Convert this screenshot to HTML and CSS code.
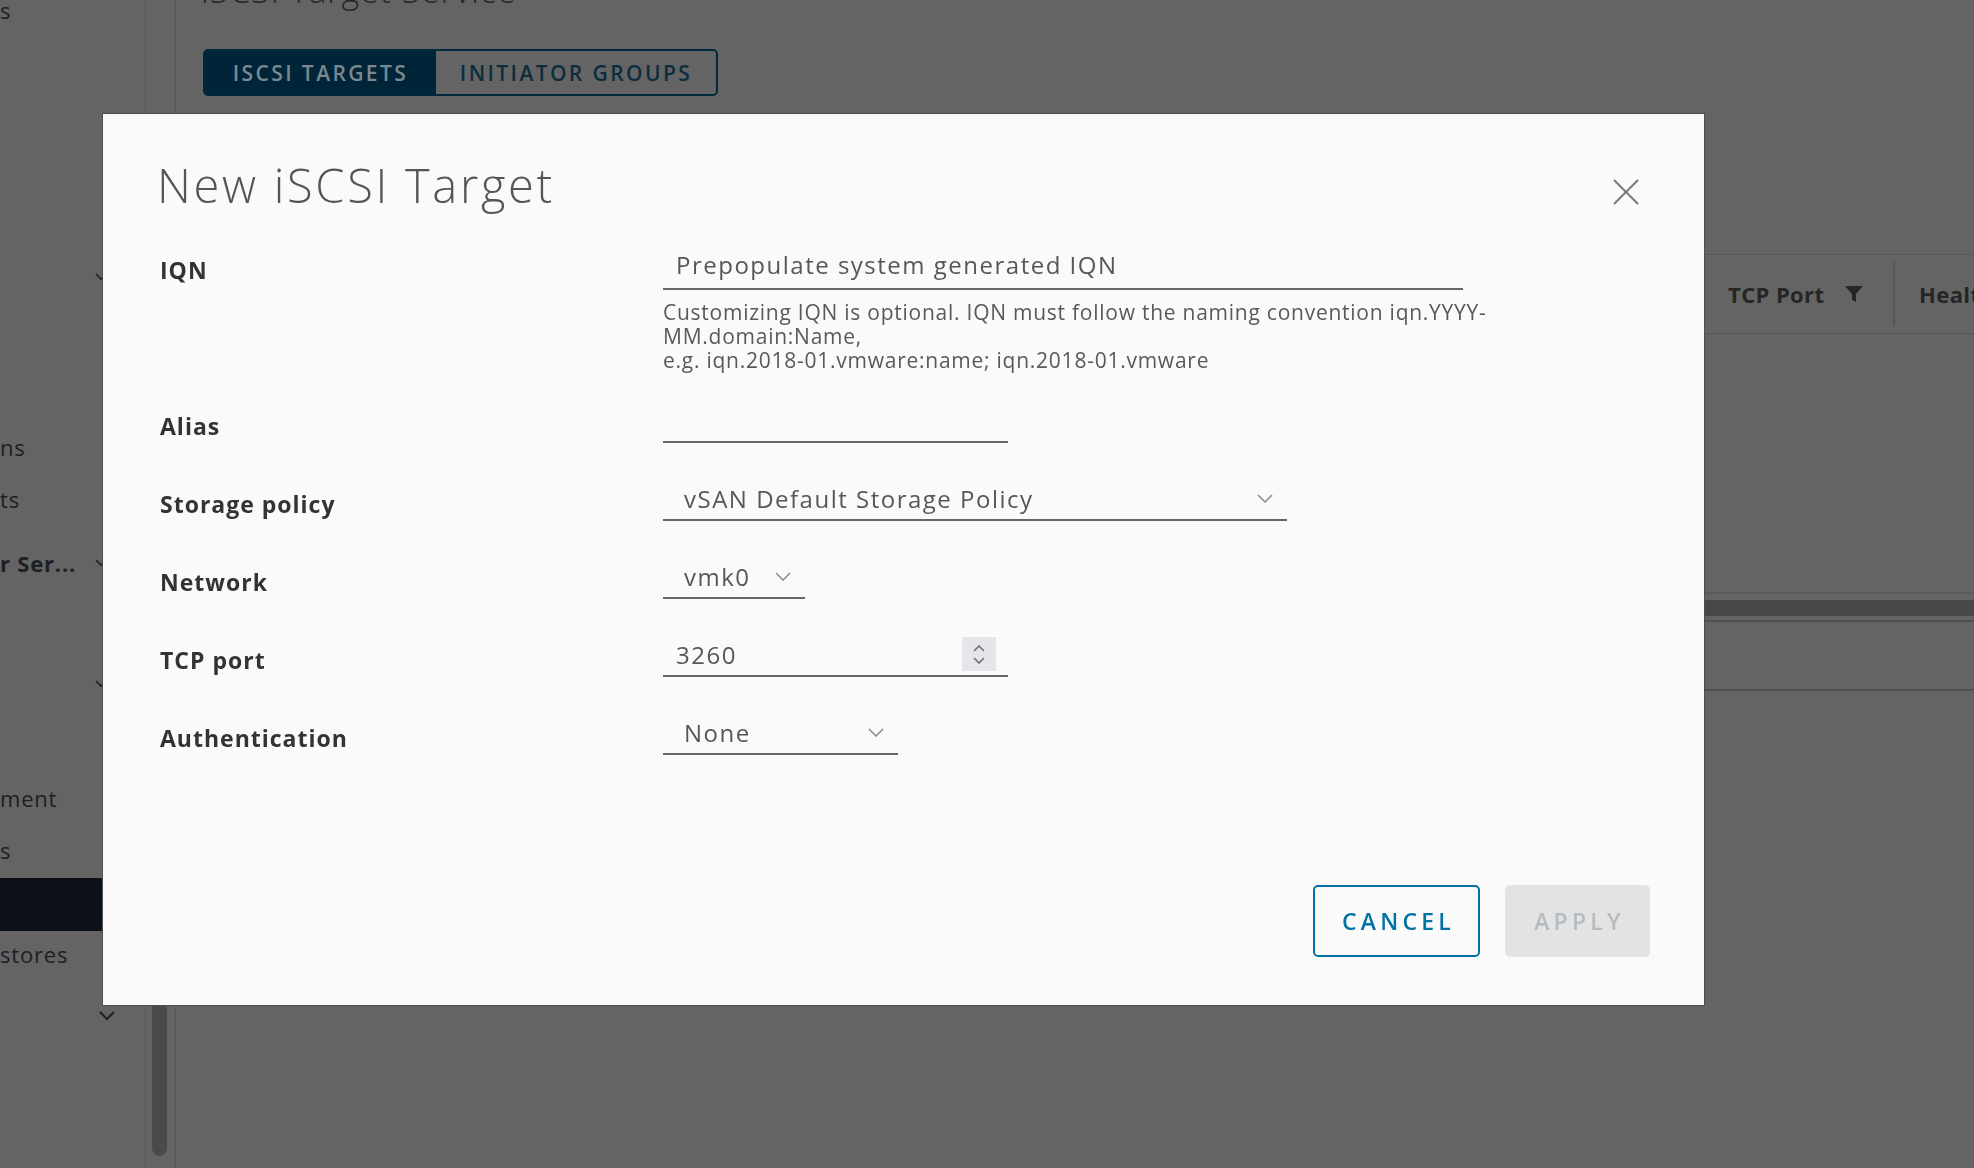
FILE: index.html
```html
<!DOCTYPE html>
<html lang="en">
<head>
<meta charset="utf-8">
<title>New iSCSI Target</title>
<link rel="stylesheet" href="styles.css">
</head>
<body>
<div class="page">
  <aside class="sidebar">
    <div class="nav-item n-first">s</div>
    <div class="nav-group n-g1"><span class="nav-text"></span><svg class="chev" viewBox="0 0 12 8" width="12" height="8"><polyline points="1,1 6,6 11,1"/></svg></div>
    <div class="nav-item n-ns">ns</div>
    <div class="nav-item">ts</div>
    <div class="nav-group n-g2"><span class="nav-text bold">r Ser...</span><svg class="chev" viewBox="0 0 12 8" width="12" height="8"><polyline points="1,1 6,6 11,1"/></svg></div>
    <div class="nav-group n-g3"><span class="nav-text"></span><svg class="chev" viewBox="0 0 12 8" width="12" height="8"><polyline points="1,1 6,6 11,1"/></svg></div>
    <div class="nav-item n-ment">ment</div>
    <div class="nav-item">s</div>
    <div class="nav-item selected"></div>
    <div class="nav-item n-stores">stores</div>
    <div class="nav-group n-g4"><span class="nav-text"></span><svg class="chev big" viewBox="0 0 16 10" width="16" height="10"><polyline points="1,1 8,8 15,1"/></svg></div>
  </aside>
  <div class="rail"><div class="thumb"></div></div>
  <main class="content">
    <h1 class="page-title">iSCSI Target Service</h1>
    <div class="tabs">
      <button class="tab active">ISCSI TARGETS</button>
      <button class="tab">INITIATOR GROUPS</button>
    </div>
    <div class="grid">
      <div class="grid-head">
        <div class="col col-hidden"></div>
        <div class="col col-port">
          <span>TCP Port</span>
          <svg class="filter" viewBox="0 0 18 18" width="18" height="18"><path d="M0 1 H18 L11 9 V17 L7 15 V9 Z"/></svg>
        </div>
        <div class="col-sep"></div>
        <div class="col col-health">Health</div>
      </div>
      <div class="grid-body"></div>
      <div class="grid-scroll"></div>
      <div class="grid-foot"></div>
    </div>
  </main>
</div>

<div class="overlay">
  <div class="modal">
    <div class="modal-header">
      <h2 class="modal-title">New iSCSI Target</h2>
      <button class="close" aria-label="Close">
        <svg viewBox="0 0 26 26" width="26" height="26"><line x1="1" y1="1" x2="25" y2="25"/><line x1="25" y1="1" x2="1" y2="25"/></svg>
      </button>
    </div>
    <div class="form">
      <div class="field field-iqn">
        <div class="label">IQN</div>
        <div class="control">
          <div class="input w-iqn iqn">Prepopulate system generated IQN</div>
          <p class="help">Customizing IQN is optional. IQN must follow the naming convention iqn.YYYY-<br>MM.domain:Name,<br>e.g. iqn.2018-01.vmware:name; iqn.2018-01.vmware</p>
        </div>
      </div>
      <div class="field field-alias">
        <div class="label">Alias</div>
        <div class="control">
          <div class="input w-alias"></div>
        </div>
      </div>
      <div class="field">
        <div class="label">Storage policy</div>
        <div class="control">
          <div class="input select w-policy"><span>vSAN Default Storage Policy</span><svg class="caret" viewBox="0 0 16 9" width="16" height="9"><polyline points="1,1 8,8 15,1"/></svg></div>
        </div>
      </div>
      <div class="field">
        <div class="label">Network</div>
        <div class="control">
          <div class="input select w-net"><span>vmk0</span><svg class="caret" viewBox="0 0 16 9" width="16" height="9"><polyline points="1,1 8,8 15,1"/></svg></div>
        </div>
      </div>
      <div class="field">
        <div class="label">TCP port</div>
        <div class="control">
          <div class="input number w-port"><span>3260</span>
            <div class="spinner">
              <svg viewBox="0 0 12 7" width="12" height="7"><polyline points="1,6 6,1 11,6"/></svg>
              <svg viewBox="0 0 12 7" width="12" height="7"><polyline points="1,1 6,6 11,1"/></svg>
            </div>
          </div>
        </div>
      </div>
      <div class="field">
        <div class="label">Authentication</div>
        <div class="control">
          <div class="input select w-auth"><span>None</span><svg class="caret" viewBox="0 0 16 9" width="16" height="9"><polyline points="1,1 8,8 15,1"/></svg></div>
        </div>
      </div>
    </div>
    <div class="modal-footer">
      <button class="btn btn-outline">CANCEL</button>
      <button class="btn btn-disabled">APPLY</button>
    </div>
  </div>
</div>
</body>
</html>
```

FILE: styles.css
```css
* { box-sizing: border-box; }

html, body {
  margin: 0;
  padding: 0;
  width: 1974px;
  height: 1168px;
  overflow: hidden;
  background: #646464;
  font-family: "Open Sans", "Noto Sans", sans-serif;
}

.page {
  display: flex;
  height: 1168px;
}

/* ---------- sidebar (dimmed) ---------- */
.sidebar {
  width: 146px;
  flex: 0 0 146px;
  border-right: 1px solid #575757;
  overflow: hidden;
  display: flex;
  flex-direction: column;
  color: #1c2024;
  font-size: 22px;
  letter-spacing: 0.8px;
}

.nav-item,
.nav-group {
  display: flex;
  align-items: center;
  justify-content: space-between;
  height: 52px;
  flex: 0 0 auto;
  white-space: nowrap;
}

.nav-group { height: 64px; padding-right: 38px; }

.nav-text.bold { font-weight: 700; }

.chev { fill: none; stroke: #1c2024; stroke-width: 1.6; }
.chev.big { stroke-width: 2; }

.n-first { margin-top: -16px; }
.n-g1 { margin-top: 209px; }
.n-ns { margin-top: 112px; }
.n-g2 { margin-top: 6px; }
.n-g3 { margin-top: 57px; }
.n-ment { margin-top: 56px; }
.selected { height: 53px; margin-top: 2px; background: #0b1117; }
.n-stores { height: 46px; }
.n-g4 { margin-top: 7px; padding-right: 30px; }

.rail {
  width: 30px;
  flex: 0 0 30px;
  border-right: 1px solid #575757;
  padding-left: 6px;
}

.thumb {
  width: 15px;
  margin-top: 300px;
  height: 856px;
  border-radius: 8px;
  background: #4a4a4a;
}

/* ---------- main content (dimmed) ---------- */
.content {
  flex: 1;
  padding-left: 27px;
  overflow: hidden;
}

.page-title {
  margin: -30px 0 0 -2px;
  font-size: 34px;
  line-height: 40px;
  font-weight: 300;
  letter-spacing: 0.9px;
  color: #272727;
}

.tabs {
  display: flex;
  margin-top: 39px;
  width: 515px;
  height: 47px;
  border: 2px solid #00283b;
  border-radius: 5px;
  overflow: hidden;
}

.tab {
  border: 0;
  margin: 0;
  padding: 0;
  font-family: inherit;
  font-size: 21px;
  font-weight: 600;
  letter-spacing: 2.4px;
  background: transparent;
  color: #0b2d3d;
}

.tab.active {
  width: 231px;
  background: #002538;
  color: #7b8890;
}

.tab:not(.active) { flex: 1; }

.grid {
  margin-top: 158px;
  width: 2000px;
  border-top: 1px solid #585858;
}

.grid-head {
  display: flex;
  align-items: center;
  height: 79px;
  border-bottom: 1px solid #555555;
  font-size: 22px;
  font-weight: 700;
  letter-spacing: 0.4px;
  color: #262626;
}

.col-hidden { width: 1500px; flex: 0 0 1500px; }

.col-port {
  width: 190px;
  flex: 0 0 190px;
  padding-left: 25px;
  display: flex;
  align-items: center;
  gap: 21px;
}

.filter { fill: #262626; }

.col-sep {
  width: 2px;
  height: 64px;
  background: #555555;
}

.col-health { padding-left: 24px; }

.grid-body {
  height: 260px;
  border-bottom: 2px solid #5b5b5b;
}

.grid-scroll {
  margin-top: 6px;
  height: 16px;
  background: #484848;
}

.grid-foot {
  margin-top: 4px;
  height: 71px;
  border-top: 2px solid #515151;
  border-bottom: 2px solid #515151;
}

/* ---------- modal ---------- */
.overlay {
  position: fixed;
  inset: 0;
  padding: 114px 0 0 103px;
}

.modal {
  width: 1601px;
  background: #fafafa;
  box-shadow: 0 0 0 1px #4e4e4e;
  padding: 43px 54px 48px 57px;
  color: #575757;
}

.modal-header {
  display: flex;
  justify-content: space-between;
  align-items: flex-start;
}

.modal-title {
  margin: 0 0 0 -3px;
  font-size: 47px;
  line-height: 56px;
  font-weight: 300;
  letter-spacing: 2.7px;
  color: #555555;
}

.close {
  margin: 22px 11px 0 0;
  padding: 0;
  border: 0;
  background: transparent;
  width: 26px;
  height: 26px;
}

.close svg { display: block; stroke: #7a7a7a; stroke-width: 2; }

.form { margin-top: 18px; }

.field {
  display: grid;
  grid-template-columns: 503px auto;
  justify-content: start;
  min-height: 78px;
}

.label {
  font-size: 23px;
  line-height: 78px;
  font-weight: 700;
  letter-spacing: 1px;
  color: #333333;
}

.control { padding-top: 12px; }
.field-iqn .control { padding-top: 15px; }
.field-alias { margin-top: 15px; }

.input {
  display: flex;
  align-items: center;
  height: 44px;
  padding: 0 13px;
  border-bottom: 2px solid #666666;
  font-size: 24px;
  letter-spacing: 1.5px;
  color: #575757;
  white-space: nowrap;
}

.iqn { padding-bottom: 6px; }

.select {
  justify-content: space-between;
  padding: 0 14px 0 21px;
}

.caret { fill: none; stroke: #8a8a8a; stroke-width: 1.5; }

.number {
  justify-content: space-between;
  padding-right: 12px;
}

.spinner {
  width: 34px;
  height: 34px;
  background: #e6e6ea;
  display: flex;
  flex-direction: column;
  align-items: center;
  justify-content: center;
  gap: 5px;
}

.spinner svg { display: block; fill: none; stroke: #707070; stroke-width: 1.6; }

.w-iqn { width: 800px; }
.w-alias { width: 345px; }
.w-policy { width: 624px; }
.w-net { width: 142px; }
.w-port { width: 345px; }
.w-auth { width: 235px; }

.help {
  margin: 10px 0 0;
  font-size: 21px;
  line-height: 24px;
  letter-spacing: 0.75px;
  color: #595959;
  white-space: nowrap;
}

.modal-footer {
  display: flex;
  justify-content: flex-end;
  gap: 25px;
  margin-top: 108px;
}

.btn {
  height: 72px;
  border-radius: 5px;
  font-family: inherit;
  font-size: 23px;
  font-weight: 600;
  letter-spacing: 4.2px;
  padding: 0 0 0 4px;
}

.btn-outline {
  width: 167px;
  border: 2px solid #0072a3;
  background: transparent;
  color: #0072a3;
}

.btn-disabled {
  width: 145px;
  border: 0;
  background: #e3e3e3;
  color: #b5bcc1;
}
```
